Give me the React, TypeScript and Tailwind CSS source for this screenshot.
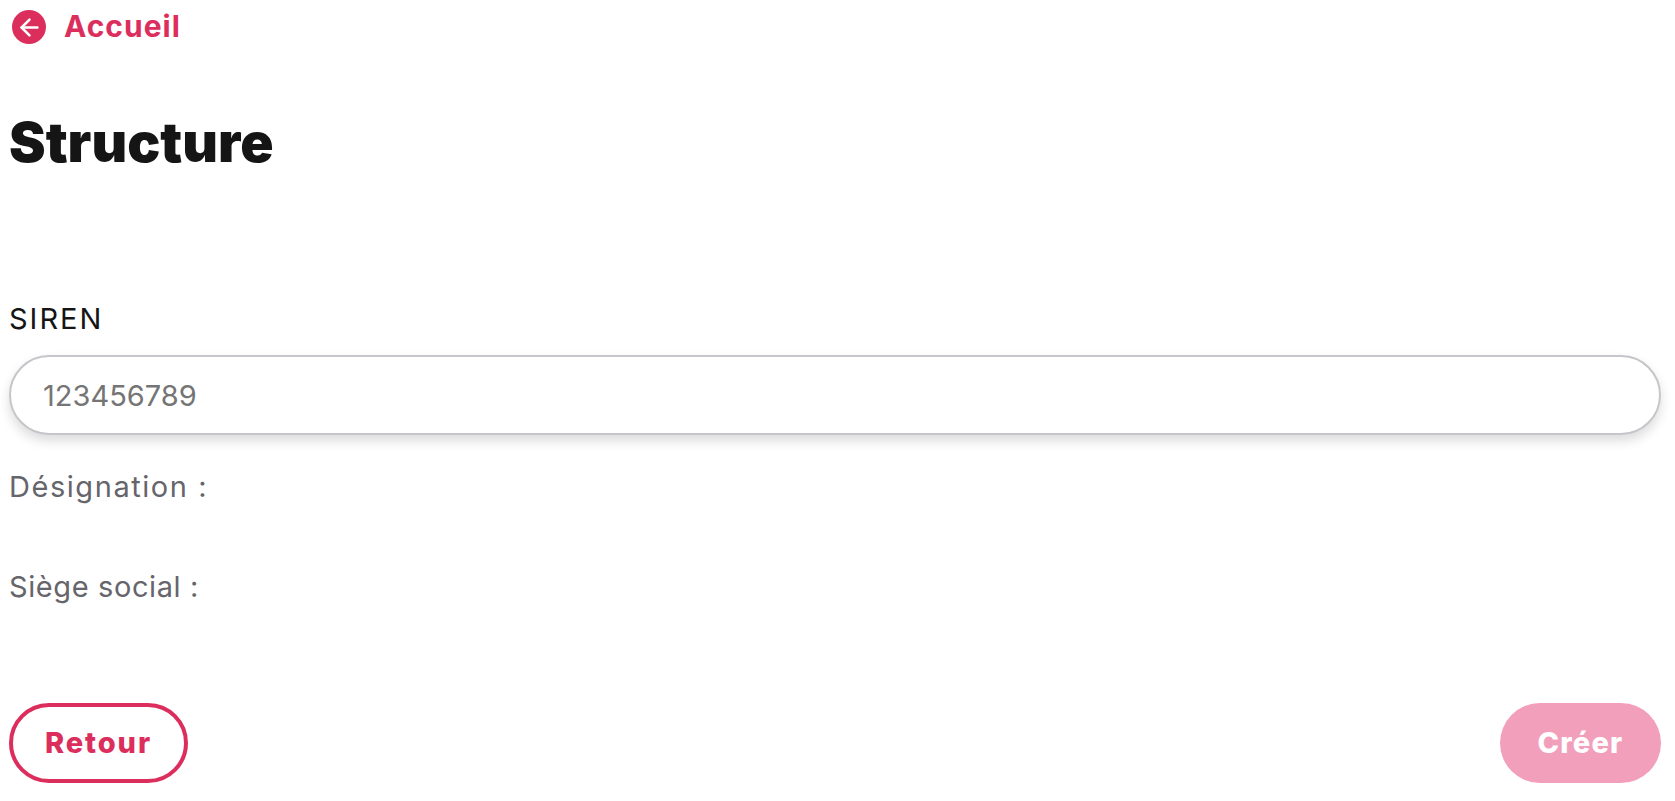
import React from 'react';
import { ArrowLeft } from 'lucide-react';

const font = "font-['Inter','Liberation_Sans',sans-serif]";

export default function App() {
  return (
    <div className={`${font} h-[801px] flex flex-col bg-white pl-[9px] pr-[14px] overflow-hidden`}>
      <a className="flex items-center h-[54px] pl-[3px] gap-[18px] text-[#dc2e5d] text-[30px] font-bold">
        <span className="w-[34px] h-[34px] rounded-full bg-[#dc2e5d] flex items-center justify-center">
          <ArrowLeft size={27} strokeWidth={2.2} className="text-white" aria-hidden="true" />
        </span>
        <span className="mb-[2px] tracking-[1px]">Accueil</span>
      </a>

      <h1 className="mt-[53px] text-[55px] leading-[70px] font-black text-[#151515]">Structure</h1>

      <label className="mt-[124px] text-[29px] leading-[36px] tracking-[2px] text-[#151515]">SIREN</label>
      <input
        readOnly
        placeholder="123456789"
        className="mt-[18px] h-[80px] w-full rounded-[40px] border-2 border-[#c6c5ca] bg-white pl-[32px] text-[29px] text-[#757575] placeholder:text-[#757575] shadow-[0_6px_12px_rgba(0,0,0,0.14)] outline-none"
      />

      <p className="mt-[34px] text-[29px] leading-[36px] tracking-[1.55px] text-[#66656b]">Désignation :</p>
      <p className="mt-[64px] text-[29px] leading-[36px] tracking-[0.6px] text-[#66656b]">Siège social :</p>

      <div className="mt-[98px] flex items-center justify-between">
        <button className="h-[80px] w-[179px] rounded-[40px] border-[4px] border-[#dc2e5d] bg-white text-[#dc2e5d] text-[29px] font-extrabold tracking-[1.9px]">
          Retour
        </button>
        <button className="h-[80px] w-[161px] rounded-[40px] bg-[#f29fbc] text-white text-[29px] font-extrabold tracking-[1.2px]">
          Créer
        </button>
      </div>
    </div>
  );
}
